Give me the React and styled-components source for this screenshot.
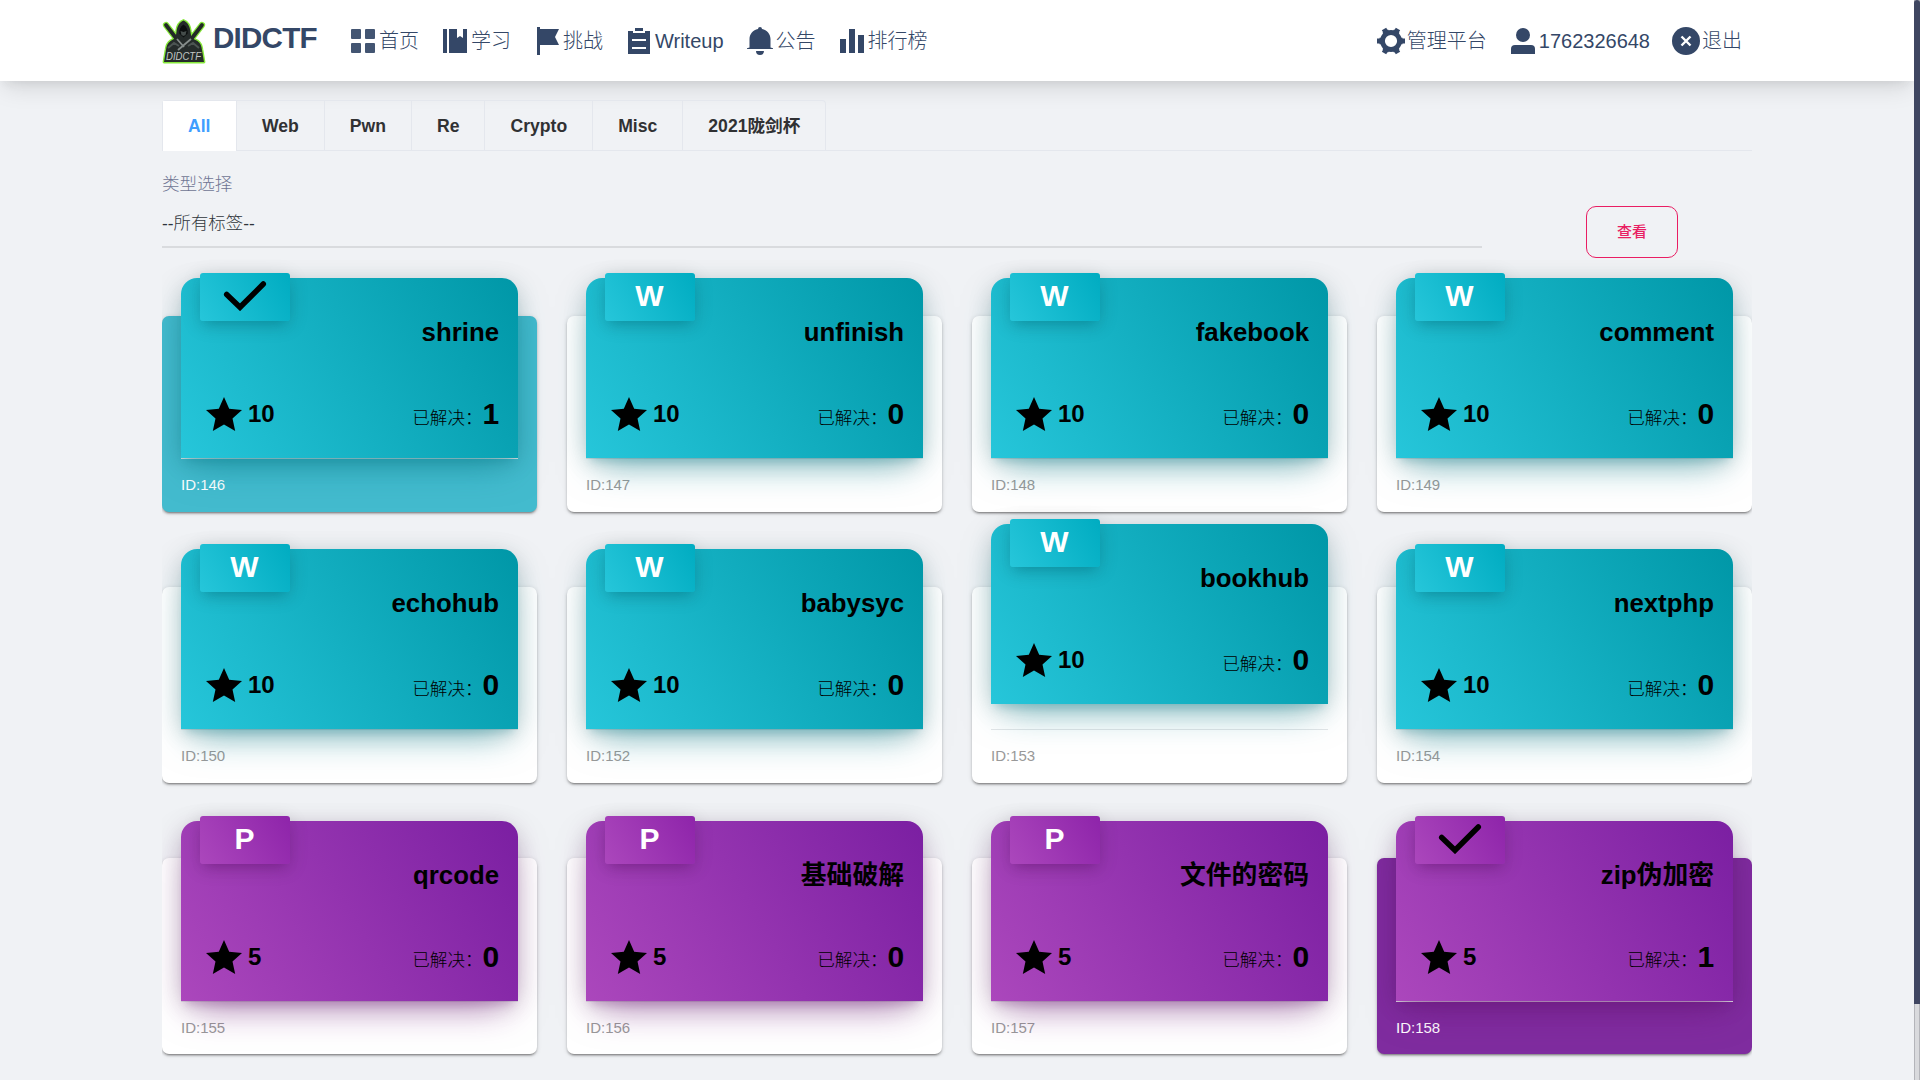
import React from "react";
import styled, { createGlobalStyle } from "styled-components";

const ink = "#344767";

const GlobalStyle = createGlobalStyle`
  * { box-sizing: border-box; }
  body {
    margin: 0;
    background: #f0f2f5;
    font-family: "Liberation Sans", Arial, "Noto Sans CJK SC", sans-serif;
    overflow: hidden;
  }
`;

const Shell = styled.div`
  display: flex;
  height: 1080px;
  overflow: hidden;
`;

const Page = styled.div`
  flex: 1;
  min-width: 0;
  overflow: hidden;
`;

const ScrollTrack = styled.div`
  width: 6px;
  background: #d9dadd;
  border: 1px solid #b4b5ba;
  border-width: 0 1px;
`;

const ScrollThumb = styled.div`
  height: 1004px;
  margin: 0 -1px;
  border-radius: 3px 3px 0 0;
  background: #3f4661;
`;

const TopBar = styled.header`
  display: flex;
  align-items: center;
  height: 81px;
  padding: 0 172px 0 162px;
  background: #fff;
  box-shadow: 0 8px 26px -4px rgba(20, 20, 20, 0.15), 0 8px 9px -5px rgba(20, 20, 20, 0.06);
`;

const Brand = styled.div`
  display: flex;
  align-items: center;
  width: 187px;
  gap: 7px;
  color: ${ink};
  font-size: 29.6px;
  font-weight: 700;
  letter-spacing: -0.8px;
  line-height: 34px;
`;

const BrandName = styled.span`
  padding-bottom: 6px;
`;

const Nav = styled.nav`
  display: flex;
  gap: 22px;
  margin-left: ${(p) => (p.$right ? "auto" : 0)};
`;

const NavItem = styled.a`
  display: flex;
  align-items: center;
  gap: 2px;
  color: ${ink};
  font-size: 20px;
  font-weight: 300;
  line-height: 28px;
  white-space: nowrap;

  svg {
    flex: none;
  }
`;

const Content = styled.main`
  width: 1590px;
  margin: 19px 0 0 162px;
`;

const Tabs = styled.div`
  display: flex;
  height: 51px;
  border-bottom: 1px solid #e4e7ed;
`;

const TabGroup = styled.div`
  display: flex;
  height: 51px;
  border: 1px solid #e4e7ed;
  border-bottom: 0;
  border-radius: 4px 4px 0 0;
`;

const Tab = styled.div`
  padding: 0 25px;
  border-left: 1px solid #e4e7ed;
  border-bottom: 1px solid ${(p) => (p.$active ? "#fff" : "#e4e7ed")};
  background: ${(p) => (p.$active ? "#fff" : "transparent")};
  color: ${(p) => (p.$active ? "#409eff" : "#303133")};
  font-size: 17.6px;
  font-weight: 700;
  line-height: 50px;
  white-space: nowrap;

  &:first-child {
    border-left: 0;
    padding-right: 25.5px;
  }

  &:last-child {
    padding-right: 24.5px;
  }
`;

const Filter = styled.div`
  display: flex;
  align-items: flex-start;
  gap: 104px;
  height: 86px;
  margin-top: 21px;
`;

const Field = styled.div`
  width: 1320px;
  border-bottom: 2px solid #d9dbde;
  font-size: 17.6px;
  font-weight: 300;
`;

const Label = styled.div`
  height: 37px;
  color: #6f7593;
  line-height: 24px;
`;

const Select = styled.div`
  height: 37px;
  color: #2f353b;
  font-size: 17.4px;
  line-height: 28px;
`;

const ViewButton = styled.button`
  width: 92px;
  height: 52px;
  margin-top: 34px;
  padding: 0;
  border: 1px solid #e91e63;
  border-radius: 10px;
  background: transparent;
  color: #e91e63;
  font: 500 15px/50px "Liberation Sans", "Noto Sans CJK SC", sans-serif;
`;

const Grid = styled.div`
  display: grid;
  grid-template-columns: repeat(4, 375px);
  gap: 75.15px 30px;
  padding-top: 57.8px;
  clip-path: inset(-60px 0 -60px 0);
`;

const themes = {
  web: {
    face: "linear-gradient(60deg, #26c6da, #0097a7)",
    badge: "linear-gradient(60deg, #26c6da, #00acc1)",
    solid: "#43bbce",
    glow: "0, 130, 145",
  },
  pwn: {
    face: "linear-gradient(60deg, #ab47bc, #7b1fa2)",
    badge: "linear-gradient(60deg, #ab47bc, #8e24aa)",
    solid: "#7f2c9f",
    glow: "115, 20, 125",
  },
};

const Card = styled.article`
  height: 196.1px;
  padding: 0 19px;
  border-radius: 7px;
  background: ${(p) => (p.$solved ? themes[p.$kind].solid : "#fff")};
  box-shadow: 0 2px 2px 0 rgba(0, 0, 0, 0.2), 0 3px 1px -2px rgba(0, 0, 0, 0.2),
    0 1px 5px 0 rgba(0, 0, 0, 0.14);
`;

const Face = styled.div`
  position: relative;
  z-index: 1;
  display: flex;
  flex-direction: column;
  justify-content: space-between;
  height: 180px;
  margin-top: -37.6px;
  padding: 38px 19px 27px 25px;
  border-radius: 16px 16px 0 0;
  background: ${(p) => themes[p.$kind].face};
  box-shadow: 0 16px 38px -12px rgba(${(p) => themes[p.$kind].glow}, 0.56),
    0 4px 25px 0 rgba(0, 0, 0, 0.14), 0 8px 10px -5px rgba(${(p) => themes[p.$kind].glow}, 0.2);
  transform: ${(p) => (p.$raised ? "translateY(-25px)" : "none")};
  color: #000;
`;

const Badge = styled.div`
  position: absolute;
  top: -5px;
  left: 19px;
  display: flex;
  justify-content: center;
  width: 90px;
  height: 48px;
  border-radius: 3px;
  background: ${(p) => themes[p.$kind].badge};
  box-shadow: 0 4px 20px 0 rgba(0, 0, 0, 0.14), 0 7px 12px -5px rgba(${(p) => themes[p.$kind].glow}, 0.4);
  color: #fff;
  font-size: 30px;
  font-weight: 700;
  line-height: 48px;
`;

const BadgeLetter = styled.span`
  padding-right: 1px;
  line-height: 46px;
`;

const Title = styled.h3`
  margin: 0;
  font-size: 25.8px;
  font-weight: 700;
  line-height: 32px;
  text-align: right;
`;

const Stats = styled.div`
  display: flex;
  align-items: center;
  justify-content: space-between;
  height: 34px;
`;

const Score = styled.div`
  display: flex;
  align-items: center;
  gap: 6px;
  font-size: 24px;
  font-weight: 700;
  line-height: 36px;
`;

const SolvedCount = styled.div`
  display: flex;
  align-items: center;
  font-size: 17.6px;
  font-weight: 300;
  line-height: 34px;
`;

const CountLabel = styled.span`
  padding-top: 7px;
`;

const Count = styled.b`
  font-size: 30px;
  font-weight: 700;
  letter-spacing: -0.3px;
`;

const Footer = styled.div`
  height: 53px;
  border-top: 1px solid #e4e6e8;
  color: ${(p) => (p.$solved ? "#fff" : "#999")};
  font-size: 15px;
  line-height: 52.4px;
`;

const Icon = ({ children, w = 28, h = 28 }) => (
  <svg width={w} height={h} viewBox={`0 0 ${w} ${h}`} fill="currentColor">
    {children}
  </svg>
);

const GridIcon = () => (
  <Icon>
    <g opacity=".92">
      <rect x="2" y="2" width="10" height="10" rx="1" />
      <rect x="16" y="2" width="10" height="10" rx="1" />
      <rect x="2" y="16" width="10" height="10" rx="1" />
      <rect x="16" y="16" width="10" height="10" rx="1" />
    </g>
  </Icon>
);
const BookIcon = () => (
  <Icon>
    <path d="M2 2h4v24H2zM8 2h8v9l3-2 3 2V2h4v24H8z" />
  </Icon>
);
const FlagIcon = () => (
  <Icon>
    <path d="M4 0h3v2h19l-4 8 4 8H7v10H4z" />
  </Icon>
);
const ClipboardIcon = () => (
  <Icon>
    <path d="M10 1h8v3h-8zM3 4h5v2h12V4h5v23H3zM7 12v2h14v-2zM7 20v2h14v-2z" fillRule="evenodd" />
  </Icon>
);
const BellIcon = () => (
  <Icon>
    <path d="M14 0a2 2 0 0 1 2 2c5 1 8.500 5 8.500 10v8.500l2.500.7V22H1v-.8l2.500-.7V12c0-5 3.500-9 8.500-10a2 2 0 0 1 2-2zM10 24h8a4 4 0 0 1-8 0z" />
  </Icon>
);
const BarsIcon = () => (
  <Icon>
    <path d="M2 12h6v14H2zM11 2h6v24h-6zM20 8h6v18h-6z" />
  </Icon>
);
const GearIcon = () => (
  <Icon>
    <circle cx="14" cy="14" r="8.500" fill="none" stroke="currentColor" strokeWidth="4.800" />
    {[0, 60, 120, 180, 240, 300].map((a) => (
      <path key={a} d="M23 10.800h2.500v.7H28v5h-2.500v.7H23z" transform={`rotate(${a} 14 14)`} />
    ))}
  </Icon>
);
const UserIcon = () => (
  <Icon>
    <circle cx="14" cy="8" r="7" />
    <path d="M6 18h16a4 4 0 0 1 4 4v5H2v-5a4 4 0 0 1 4-4z" />
  </Icon>
);
const CloseIcon = () => (
  <Icon>
    <circle cx="14" cy="14" r="14" />
    <path d="M9.500 9.500l9 9M18.500 9.500l-9 9" stroke="#fff" strokeWidth="2.400" />
  </Icon>
);

const StarIcon = () => (
  <Icon w={36} h={34}>
    <path d="M18 0l5.200 11.800L36 13l-9.500 8.600L29.200 34 18 27.600 6.800 34l2.700-12.400L0 13l12.800-1.200z" />
  </Icon>
);

const CheckIcon = () => (
  <svg width="44" height="38" viewBox="0 0 44 38" fill="none">
    <path d="M3.700 21.500L17 34.300 40.300 11" stroke="#000" strokeWidth="5.500" strokeLinecap="round" />
  </svg>
);

const bodyShape =
  "M21.500 2.500c-4 1.500-6.500 6-7 11.500l-1 6-5 3c-3 2-4 5-4.500 9L2 44h40l-2-12c-.5-4-1.500-7-4.500-9l-6-3-1-6c-.5-5.500-3-10-7-11.500z";

const Logo = () => (
  <svg width="44" height="46" viewBox="0 0 44 46">
    <g stroke="#86e83a" strokeLinecap="round" strokeLinejoin="round">
      <path d="M4 7l13 17M40 7L27 24" strokeWidth="6.200" />
      <path d={bodyShape} strokeWidth="2.800" fill="#86e83a" />
    </g>
    <path d="M4 7l13 17M40 7L27 24" stroke="#232927" strokeWidth="3.800" strokeLinecap="round" />
    <path d={bodyShape} fill="#252b2a" />
    <path d="M21.500 6.500c-3 2-4.700 5.500-4.200 9l4.200 4 4.200-4c.5-3.500-1.200-7-4.200-9z" fill="#0b0e0e" />
    <path d="M18.500 13l3 1 3-1-1 4-2 1-2-1z" fill="#454d4b" />
    <path d="M6 30l6-5 5 3M37 30l-6-5-5 3" stroke="#4c5452" strokeWidth="2" fill="none" />
    <path d="M15 21l7 8M29 21L16 32" stroke="#868d8b" strokeWidth="1.800" fill="none" />
    <text
      x="4"
      y="42"
      fill="#c3c7c5"
      fontFamily="Liberation Sans, sans-serif"
      fontSize="11"
      letterSpacing="0"
      fontStyle="italic"
      fontWeight="400"
      textLength="35"
      lengthAdjust="spacingAndGlyphs"
    >
      DIDCTF
    </text>
  </svg>
);

const mainNav = [
  [GridIcon, "首页"],
  [BookIcon, "学习"],
  [FlagIcon, "挑战"],
  [ClipboardIcon, "Writeup"],
  [BellIcon, "公告"],
  [BarsIcon, "排行榜"],
];

const userNav = [
  [GearIcon, "管理平台"],
  [UserIcon, "1762326648"],
  [CloseIcon, "退出"],
];

const tabs = ["All", "Web", "Pwn", "Re", "Crypto", "Misc", "2021陇剑杯"];

const challenges = [
  { id: 146, title: "shrine", kind: "web", score: 10, count: 1, solved: true },
  { id: 147, title: "unfinish", kind: "web", score: 10, count: 0 },
  { id: 148, title: "fakebook", kind: "web", score: 10, count: 0 },
  { id: 149, title: "comment", kind: "web", score: 10, count: 0 },
  { id: 150, title: "echohub", kind: "web", score: 10, count: 0 },
  { id: 152, title: "babysyc", kind: "web", score: 10, count: 0 },
  { id: 153, title: "bookhub", kind: "web", score: 10, count: 0, raised: true },
  { id: 154, title: "nextphp", kind: "web", score: 10, count: 0 },
  { id: 155, title: "qrcode", kind: "pwn", score: 5, count: 0 },
  { id: 156, title: "基础破解", kind: "pwn", score: 5, count: 0 },
  { id: 157, title: "文件的密码", kind: "pwn", score: 5, count: 0 },
  { id: 158, title: "zip伪加密", kind: "pwn", score: 5, count: 1, solved: true },
];

const NavList = ({ items, right }) => (
  <Nav $right={right}>
    {items.map(([Glyph, text]) => (
      <NavItem key={text}>
        <Glyph />
        <span>{text}</span>
      </NavItem>
    ))}
  </Nav>
);

const Challenge = ({ id, title, kind, score, count, solved, raised }) => (
  <Card $kind={kind} $solved={solved}>
    <Face $kind={kind} $raised={raised}>
      <Badge $kind={kind}>
        {solved ? <CheckIcon /> : <BadgeLetter>{kind === "web" ? "W" : "P"}</BadgeLetter>}
      </Badge>
      <Title>{title}</Title>
      <Stats>
        <Score>
          <StarIcon />
          {score}
        </Score>
        <SolvedCount>
          <CountLabel>已解决：</CountLabel>
          <Count>{count}</Count>
        </SolvedCount>
      </Stats>
    </Face>
    <Footer $solved={solved}>ID:{id}</Footer>
  </Card>
);

export default function App() {
  return (
    <>
      <GlobalStyle />
      <Shell>
        <Page>
          <TopBar>
            <Brand>
              <Logo />
              <BrandName>DIDCTF</BrandName>
            </Brand>
            <NavList items={mainNav} />
            <NavList items={userNav} right />
          </TopBar>
          <Content>
            <Tabs>
              <TabGroup>
                {tabs.map((t, i) => (
                  <Tab key={t} $active={i === 0}>
                    {t}
                  </Tab>
                ))}
              </TabGroup>
            </Tabs>
            <Filter>
              <Field>
                <Label>类型选择</Label>
                <Select>--所有标签--</Select>
              </Field>
              <ViewButton>查看</ViewButton>
            </Filter>
            <Grid>
              {challenges.map((c) => (
                <Challenge key={c.id} {...c} />
              ))}
            </Grid>
          </Content>
        </Page>
        <ScrollTrack>
          <ScrollThumb />
        </ScrollTrack>
      </Shell>
    </>
  );
}
